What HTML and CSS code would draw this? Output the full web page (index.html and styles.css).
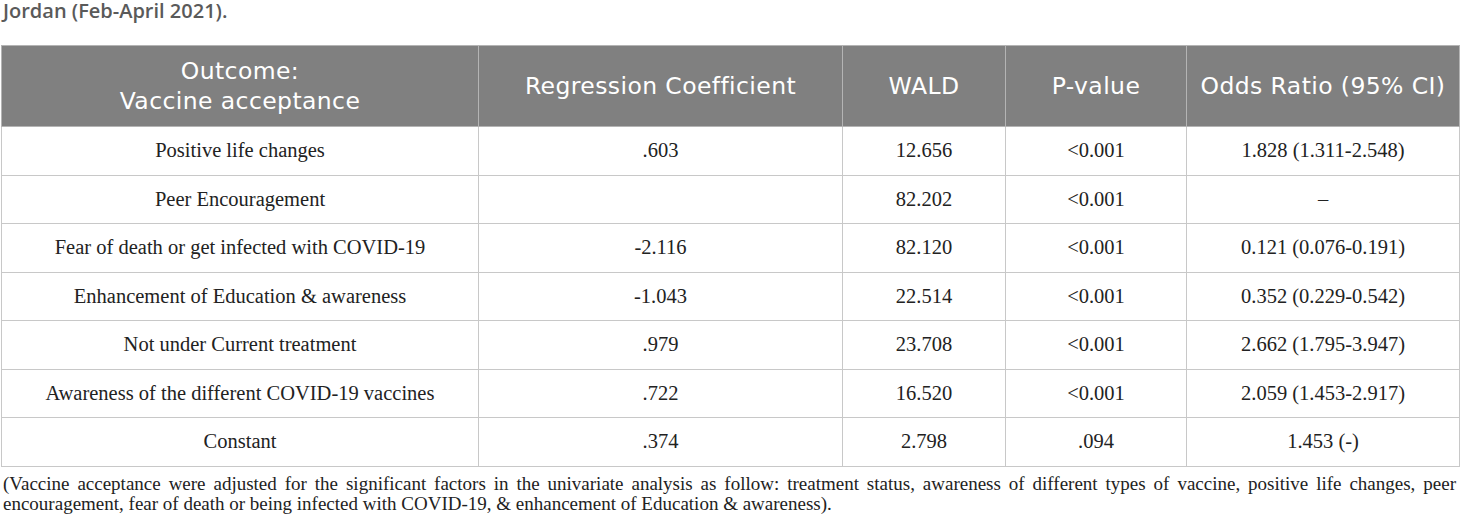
FILE: index.html
```html
<!DOCTYPE html>
<html lang="en">
<head>
    <meta charset="UTF-8">
    <title>Vaccine acceptance regression</title>
    <link rel="stylesheet" href="styles.css">
</head>
<body>
    <p class="caption">Jordan (Feb-April 2021).</p>
    <table class="results">
        <colgroup>
            <col class="c1"><col class="c2"><col class="c3"><col class="c4"><col class="c5">
        </colgroup>
        <thead>
            <tr>
                <th>Outcome:<br>Vaccine acceptance</th>
                <th>Regression Coefficient</th>
                <th>WALD</th>
                <th>P-value</th>
                <th>Odds Ratio (95% CI)</th>
            </tr>
        </thead>
        <tbody>
            <tr><td>Positive life changes</td><td>.603</td><td>12.656</td><td>&lt;0.001</td><td>1.828 (1.311-2.548)</td></tr>
            <tr><td>Peer Encouragement</td><td></td><td>82.202</td><td>&lt;0.001</td><td>–</td></tr>
            <tr><td>Fear of death or get infected with COVID-19</td><td>-2.116</td><td>82.120</td><td>&lt;0.001</td><td>0.121 (0.076-0.191)</td></tr>
            <tr><td>Enhancement of Education &amp; awareness</td><td>-1.043</td><td>22.514</td><td>&lt;0.001</td><td>0.352 (0.229-0.542)</td></tr>
            <tr><td>Not under Current treatment</td><td>.979</td><td>23.708</td><td>&lt;0.001</td><td>2.662 (1.795-3.947)</td></tr>
            <tr><td>Awareness of the different COVID-19 vaccines</td><td>.722</td><td>16.520</td><td>&lt;0.001</td><td>2.059 (1.453-2.917)</td></tr>
            <tr><td>Constant</td><td>.374</td><td>2.798</td><td>.094</td><td>1.453 (-)</td></tr>
        </tbody>
    </table>
    <p class="footnote">(Vaccine acceptance were adjusted for the significant factors in the univariate analysis as follow: treatment status, awareness of different types of vaccine, positive life changes, peer encouragement, fear of death or being infected with COVID-19, &amp; enhancement of Education &amp; awareness).</p>
</body>
</html>
```

FILE: styles.css
```css
body {
    margin: 0;
    background: #fff;
    font-family: "Liberation Serif", serif;
}
.caption {
    margin: 0 0 0 3px;
    padding-top: 1px;
    height: 44px;
    font-family: "Open Sans", sans-serif;
    font-size: 20px;
    font-weight: 600;
    line-height: 20px;
    color: #5a5a5a;
}
.results {
    border-collapse: collapse;
    width: 1458px;
    margin-left: 1px;
    table-layout: fixed;
}
.c1 { width: 477px; }
.c2 { width: 364px; }
.c3 { width: 163px; }
.c4 { width: 181px; }
.c5 { width: 273px; }
.results th {
    background-color: #808080;
    color: #fff;
    font-family: "DejaVu Sans", sans-serif;
    font-weight: normal;
    font-size: 23.5px;
    letter-spacing: 0.4px;
    line-height: 30px;
    height: 80px;
    padding: 0;
    border: 1px solid #b4b4b4;
    text-align: center;
}
.results td {
    height: 47.5px;
    padding: 0;
    border: 1px solid #c8c8c8;
    text-align: center;
    font-size: 20.5px;
    color: #222;
}
.footnote {
    margin: 7px 4px 0 3px;
    font-size: 19px;
    line-height: 20px;
    color: #222;
    text-align: justify;
}
```
